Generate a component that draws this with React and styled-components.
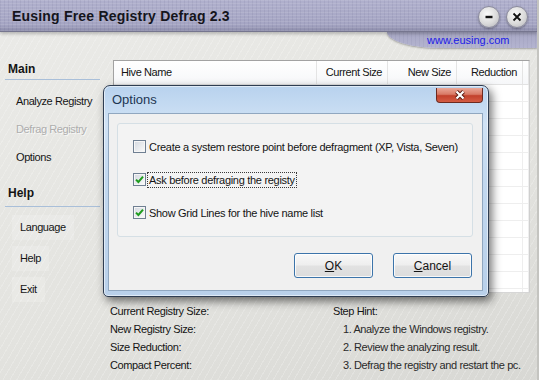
import React from "react";
import styled, { createGlobalStyle } from "styled-components";

const GlobalStyle = createGlobalStyle`
  html, body {
    margin: 0;
    padding: 0;
    background: #e4e4e0;
  }
  body {
    font-family: "Liberation Sans", Arial, sans-serif;
  }
`;

const Window = styled.div`
  position: relative;
  width: 539px;
  height: 380px;
  overflow: hidden;
  display: flex;
  flex-direction: column;
  color: #141414;
  border-right: 2px solid #c4c4c0;
  box-sizing: border-box;
  background:
    repeating-linear-gradient(120deg, rgba(255, 255, 255, 0.2) 0 1px, transparent 1px 6px),
    linear-gradient(160deg, #ebebe8 0%, #e3e3df 60%, #d8d8d4 100%);
`;

const TitleBar = styled.div`
  position: relative;
  z-index: 1;
  flex: none;
  height: 32px;
  box-sizing: border-box;
  display: flex;
  align-items: center;
  justify-content: space-between;
  padding: 0 9px 0 12px;
  background:
    repeating-linear-gradient(0deg, rgba(255, 255, 255, 0.1) 0 1px, transparent 1px 3px),
    repeating-linear-gradient(90deg, rgba(60, 60, 100, 0.08) 0 1px, transparent 1px 4px),
    linear-gradient(#b0b0cd, #a5a5c3 80%, #8c8caa);
  border-bottom: 1px solid #76768f;
  box-shadow: 0 2px 3px rgba(0, 0, 0, 0.22);
`;

const Title = styled.div`
  font-size: 14px;
  font-weight: bold;
  letter-spacing: 0.2px;
  color: #15151c;
`;

const WinButtons = styled.div`
  display: flex;
  gap: 6px;
  margin-top: 2px;
`;

const RoundButton = styled.div`
  width: 22px;
  height: 22px;
  box-sizing: border-box;
  border-radius: 50%;
  border: 1px solid #8b8b9c;
  display: flex;
  align-items: center;
  justify-content: center;
  background: radial-gradient(circle at 40% 35%, #fafafa 0%, #dadada 55%, #b0b0b8 100%);
  box-shadow: 0 1px 2px rgba(0, 0, 0, 0.3);
`;

const SubBar = styled.div`
  flex: none;
  height: 16px;
  display: flex;
  justify-content: flex-end;
`;

const SiteTab = styled.div`
  width: 150px;
  height: 16px;
  box-sizing: border-box;
  padding-left: 40px;
  font-size: 11px;
  line-height: 16px;
  color: #1b1be8;
  border-bottom-left-radius: 52px 16px;
  background:
    repeating-linear-gradient(90deg, rgba(60, 60, 100, 0.06) 0 1px, transparent 1px 4px),
    linear-gradient(#a7a7c4, #b4b4d0);
  box-shadow: 0 1px 2px rgba(0, 0, 0, 0.3);
`;

const Body = styled.div`
  flex: 1;
  display: flex;
  padding-top: 12px;
`;

const Sidebar = styled.div`
  flex: none;
  width: 108px;
  display: flex;
  flex-direction: column;
`;

const SectionHead = styled.div`
  height: ${(p) => (p.$tall ? 23 : 20)}px;
  box-sizing: border-box;
  margin: ${(p) => (p.$tall ? 13 : 0)}px 8px 0 5px;
  padding-left: 3px;
  font-size: 12px;
  font-weight: bold;
  line-height: 18px;
  border-bottom: 1px solid #a9bfd9;
`;

const ItemList = styled.div`
  display: flex;
  flex-direction: column;
  align-items: flex-start;
  gap: ${(p) => p.$gap || 0}px;
  margin-top: ${(p) => p.$top}px;
`;

const SideItem = styled.div`
  font-size: 11px;
  letter-spacing: -0.4px;
  line-height: ${(p) => (p.$boxed ? 25 : 28)}px;
  margin-left: ${(p) => (p.$boxed ? 12 : 16)}px;
  padding: 0 ${(p) => (p.$boxed ? 8 : 0)}px;
  color: ${(p) => (p.$disabled ? "#adadad" : "#151515")};
  text-shadow: ${(p) => (p.$disabled ? "1px 1px 0 rgba(255,255,255,0.7)" : "none")};
  background: ${(p) => (p.$boxed ? "rgba(255,255,255,0.18)" : "transparent")};
`;

const Content = styled.div`
  flex: 1;
  display: flex;
  flex-direction: column;
  padding: 0 7px 0 5px;
`;

const Table = styled.div`
  height: 233px;
  box-sizing: border-box;
  border: 1px solid #a2a2a2;
  border-right-color: #cfcfcf;
  border-bottom-color: #d6d6d6;
  background: #fff;
  overflow: hidden;
`;

const Row = styled.div`
  display: flex;
  height: ${(p) => (p.$head ? 24 : 17)}px;
  box-sizing: border-box;
  border-bottom: 1px solid ${(p) => (p.$head ? "#e2e2e2" : "#eeeeee")};
  background: ${(p) => (p.$head ? "linear-gradient(#ffffff, #f6f7f9)" : "#fff")};
`;

const Cell = styled.div`
  flex: ${(p) => (p.$w ? `0 0 ${p.$w}px` : "1")};
  box-sizing: border-box;
  padding-left: ${(p) => (p.$align === "left" ? 7 : 0)}px;
  padding-right: ${(p) => (p.$align === "left" ? 0 : 5)}px;
  text-align: ${(p) => p.$align || "right"};
  border-right: 1px solid ${(p) => (p.$head ? "#e4e4e4" : "#eeeeee")};
  font-size: 11px;
  letter-spacing: -0.4px;
  line-height: 23px;
  white-space: nowrap;
`;

const Info = styled.div`
  display: flex;
  margin: 9px 0 0 -3px;
  font-size: 11px;
  letter-spacing: -0.4px;
  line-height: 18px;
`;

const InfoColumn = styled.div`
  flex: ${(p) => (p.$w ? `0 0 ${p.$w}px` : "1")};
  display: flex;
  flex-direction: column;
`;

const InfoLine = styled.div`
  padding-left: ${(p) => (p.$indent ? 10 : 0)}px;
  color: ${(p) => (p.$indent ? "#2a2a2a" : "#141414")};
  white-space: nowrap;
`;

const Dialog = styled.div`
  position: absolute;
  left: 103px;
  top: 85px;
  width: 386px;
  height: 212px;
  box-sizing: border-box;
  display: flex;
  flex-direction: column;
  padding: 0 5px 5px 4px;
  border: 1px solid #2f3d52;
  border-radius: 7px 7px 5px 5px;
  background: linear-gradient(#b8d2ee 0%, #d0e2f5 18%, #c2d8ef 45%, #b9d0ea 100%);
  box-shadow:
    inset 0 0 0 1px rgba(255, 255, 255, 0.55),
    3px 4px 10px rgba(0, 0, 0, 0.55);
`;

const DialogTitle = styled.div`
  flex: none;
  height: 27px;
  display: flex;
  align-items: center;
  justify-content: space-between;
  padding-left: 4px;
  font-size: 13px;
  color: #1d3552;
`;

const CloseButton = styled.div`
  align-self: flex-start;
  margin-top: 2px;
  width: 47px;
  height: 15px;
  box-sizing: border-box;
  display: flex;
  align-items: center;
  justify-content: center;
  border: 1px solid #6d2a20;
  border-top: none;
  border-radius: 0 0 4px 4px;
  background: linear-gradient(#eaa898 0%, #d97a66 45%, #c2412c 55%, #d45c44 100%);
`;

const Client = styled.div`
  flex: 1;
  display: flex;
  flex-direction: column;
  padding: 9px 9px 0 8px;
  border: 1px solid #90a7c0;
  background: #f0f0f0;
`;

const GroupBox = styled.div`
  height: 114px;
  box-sizing: border-box;
  display: flex;
  flex-direction: column;
  gap: 20px;
  padding: 16px 0 0 15px;
  border: 1px solid #d5dfe5;
  border-radius: 3px;
  background: #f3f3f3;
`;

const CheckRow = styled.div`
  display: flex;
  align-items: center;
  gap: 1px;
  height: 13px;
`;

const Box = styled.div`
  width: 13px;
  height: 13px;
  box-sizing: border-box;
  display: flex;
  align-items: center;
  justify-content: center;
  border: 1px solid #6f7f92;
  background: linear-gradient(135deg, #d3d8df, #fbfbfb);
  box-shadow: inset 0 0 0 1px #f6f6f6;
`;

const Label = styled.span`
  padding: 0 1px;
  border: 1px ${(p) => (p.$focused ? "dotted #3a3a3a" : "solid transparent")};
  font-size: 11px;
  letter-spacing: -0.3px;
  line-height: 14px;
  white-space: nowrap;
  color: #141414;
`;

const ButtonRow = styled.div`
  display: flex;
  justify-content: flex-end;
  gap: 20px;
  margin-top: 16px;
  padding-right: 1px;
`;

const Button = styled.div`
  width: 79px;
  height: 25px;
  box-sizing: border-box;
  display: flex;
  align-items: center;
  justify-content: center;
  border: 1px solid #3c74aa;
  border-radius: 3px;
  font-size: 12px;
  color: #141414;
  background: linear-gradient(#f8f8f8 0%, #eeeeee 48%, #e2e2e2 52%, #dcdcdc 100%);
  box-shadow: inset 0 0 0 1px rgba(255, 255, 255, 0.8);
`;

const CheckMark = () => (
  <svg width="9" height="9" viewBox="0 0 9 9">
    <path d="M1 4.6 L3.4 7 L8 1.6" fill="none" stroke="#1e9c1e" strokeWidth="2" />
  </svg>
);

const options = [
  { text: "Create a system restore point before defragment (XP, Vista, Seven)", checked: false },
  { text: "Ask before defraging the registy", checked: true, focused: true },
  { text: "Show Grid Lines for the hive name list", checked: true },
];

const columns = [
  { name: "Hive Name", w: 203, align: "left" },
  { name: "Current Size", w: 71 },
  { name: "New Size", w: 69 },
  { name: "Reduction", w: 66 },
  { name: "" },
];

export default function App() {
  const rows = Array.from({ length: 13 });
  return (
    <>
      <GlobalStyle />
      <Window>
        <TitleBar>
          <Title>Eusing Free Registry Defrag 2.3</Title>
          <WinButtons>
            <RoundButton>
              <svg width="10" height="10" viewBox="0 0 10 10">
                <path d="M1.5 5 H8.5" stroke="#111" strokeWidth="2.4" />
              </svg>
            </RoundButton>
            <RoundButton>
              <svg width="10" height="10" viewBox="0 0 10 10">
                <path d="M1.5 1.5 L8.5 8.5 M8.5 1.5 L1.5 8.5" stroke="#111" strokeWidth="1.8" />
              </svg>
            </RoundButton>
          </WinButtons>
        </TitleBar>
        <SubBar>
          <SiteTab>www.eusing.com</SiteTab>
        </SubBar>
        <Body>
          <Sidebar>
            <SectionHead>Main</SectionHead>
            <ItemList $top={7}>
              <SideItem>Analyze Registry</SideItem>
              <SideItem $disabled>Defrag Registry</SideItem>
              <SideItem>Options</SideItem>
            </ItemList>
            <SectionHead $tall>Help</SectionHead>
            <ItemList $top={8} $gap={6}>
              <SideItem $boxed>Language</SideItem>
              <SideItem $boxed>Help</SideItem>
              <SideItem $boxed>Exit</SideItem>
            </ItemList>
          </Sidebar>
          <Content>
            <Table>
              <Row $head>
                {columns.map((c, i) => (
                  <Cell key={i} $head $w={c.w} $align={c.align}>
                    {c.name}
                  </Cell>
                ))}
              </Row>
              {rows.map((_, r) => (
                <Row key={r}>
                  {columns.map((c, i) => (
                    <Cell key={i} $w={c.w} />
                  ))}
                </Row>
              ))}
            </Table>
            <Info>
              <InfoColumn $w={223}>
                <InfoLine>Current Registry Size:</InfoLine>
                <InfoLine>New Registry Size:</InfoLine>
                <InfoLine>Size Reduction:</InfoLine>
                <InfoLine>Compact Percent:</InfoLine>
              </InfoColumn>
              <InfoColumn>
                <InfoLine>Step Hint:</InfoLine>
                <InfoLine $indent>1. Analyze the Windows registry.</InfoLine>
                <InfoLine $indent>2. Review the analyzing result.</InfoLine>
                <InfoLine $indent>3. Defrag the registry and restart the pc.</InfoLine>
              </InfoColumn>
            </Info>
          </Content>
        </Body>

        <Dialog>
          <DialogTitle>
            <span>Options</span>
            <CloseButton>
              <svg width="12" height="10" viewBox="0 0 12 10">
                <path d="M2.5 1.5 L9.5 8.5 M9.5 1.5 L2.5 8.5" stroke="#5a1a12" strokeWidth="4" />
                <path d="M2.5 1.5 L9.5 8.5 M9.5 1.5 L2.5 8.5" stroke="#ffffff" strokeWidth="2.2" />
              </svg>
            </CloseButton>
          </DialogTitle>
          <Client>
            <GroupBox>
              {options.map((o) => (
                <CheckRow key={o.text}>
                  <Box>{o.checked && <CheckMark />}</Box>
                  <Label $focused={o.focused}>{o.text}</Label>
                </CheckRow>
              ))}
            </GroupBox>
            <ButtonRow>
              <Button>
                <span>
                  <u>O</u>K
                </span>
              </Button>
              <Button>
                <span>
                  <u>C</u>ancel
                </span>
              </Button>
            </ButtonRow>
          </Client>
        </Dialog>
      </Window>
    </>
  );
}
